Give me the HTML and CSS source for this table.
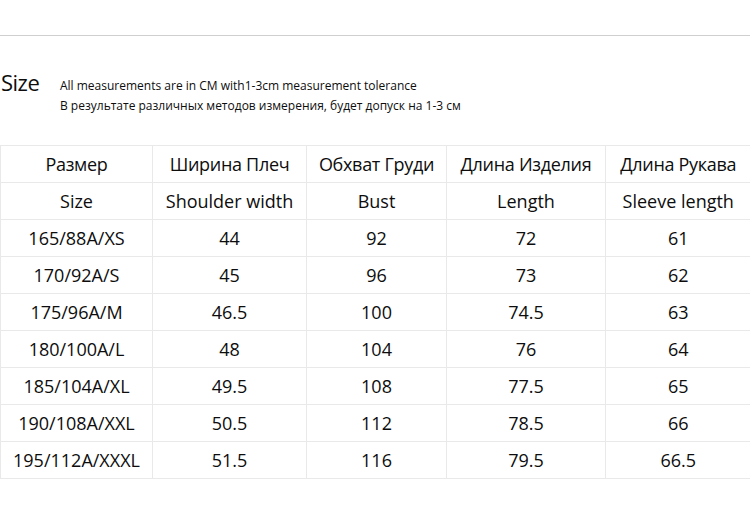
FILE: index.html
```html
<!DOCTYPE html>
<html lang="ru">
<head>
<meta charset="utf-8">
<link rel="stylesheet" href="styles.css">
</head>
<body>
<div class="rule"></div>
<div class="heading">
  <div class="title">Size</div>
  <div class="notes">
    <div class="note">All measurements are in CM with1-3cm measurement tolerance</div>
    <div class="note">В результате различных методов измерения, будет допуск на 1-3 см</div>
  </div>
</div>
<table class="sizes">
  <colgroup>
    <col class="c1"><col class="c2"><col class="c3"><col class="c4"><col class="c5">
  </colgroup>
  <tr class="ru"><td>Размер</td><td>Ширина Плеч</td><td>Обхват Груди</td><td>Длина Изделия</td><td>Длина Рукава</td></tr>
  <tr><td>Size</td><td>Shoulder width</td><td>Bust</td><td>Length</td><td>Sleeve length</td></tr>
  <tr><td>165/88A/XS</td><td>44</td><td>92</td><td>72</td><td>61</td></tr>
  <tr><td>170/92A/S</td><td>45</td><td>96</td><td>73</td><td>62</td></tr>
  <tr><td>175/96A/M</td><td>46.5</td><td>100</td><td>74.5</td><td>63</td></tr>
  <tr><td>180/100A/L</td><td>48</td><td>104</td><td>76</td><td>64</td></tr>
  <tr><td>185/104A/XL</td><td>49.5</td><td>108</td><td>77.5</td><td>65</td></tr>
  <tr><td>190/108A/XXL</td><td>50.5</td><td>112</td><td>78.5</td><td>66</td></tr>
  <tr><td>195/112A/XXXL</td><td>51.5</td><td>116</td><td>79.5</td><td>66.5</td></tr>
</table>
</body>
</html>
```
FILE: styles.css
```css
html, body {
  margin: 0;
  padding: 0;
  background: #fff;
}
body {
  font-family: "Open Sans", "Noto Sans", sans-serif;
  color: #0d0d0d;
  width: 750px;
  height: 506px;
  overflow: hidden;
}
.rule {
  margin-top: 35px;
  height: 1px;
  background: #cfcfcf;
}
.heading {
  display: flex;
  align-items: flex-start;
  margin-top: 31px;
  height: 78px;
}
.title {
  font-size: 22px;
  line-height: 30px;
  padding-left: 1px;
  width: 59px;
  letter-spacing: -0.5px;
}
.notes {
  padding-top: 9px;
  font-size: 12px;
  line-height: 20px;
}
.sizes {
  border-collapse: collapse;
  table-layout: fixed;
  width: 750px;
}
.c1 { width: 152px; }
.c2 { width: 154px; }
.c3 { width: 140px; }
.c4 { width: 159px; }
.c5 { width: 145px; }
.sizes td {
  border: 1px solid #e9e9e9;
  height: 36px;
  padding: 0;
  text-align: center;
  vertical-align: middle;
  font-size: 18px;
  white-space: nowrap;
}
.sizes .ru td {
  letter-spacing: -0.3px;
}
.sizes td:last-child {
  border-right: none;
}
```
